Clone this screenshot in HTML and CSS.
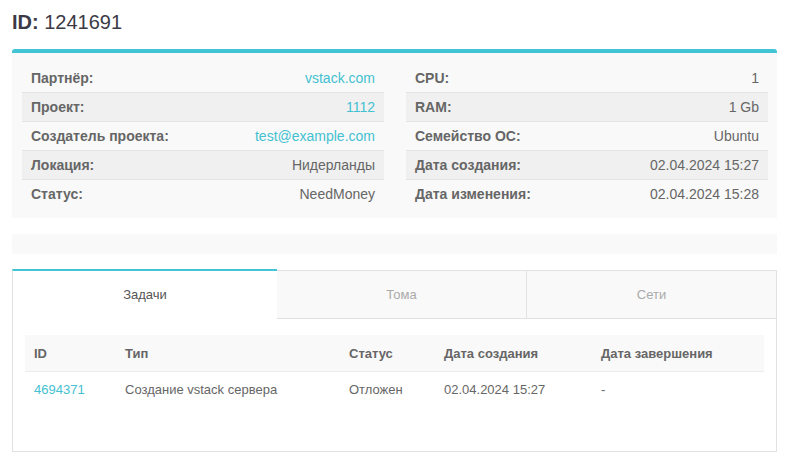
FILE: index.html
```html
<!DOCTYPE html>
<html lang="ru">
  <head>
    <meta charset="UTF-8" />
    <meta name="viewport" content="width=device-width, initial-scale=1.0" />
    <title>ID: 1241691</title>
    <link rel="stylesheet" href="styles.css">
  </head>
  <body>
    <h1 class="page-title"><b>ID:</b> 1241691</h1>

    <div class="info-card">
      <div class="info-table">
        <div class="info-row">
          <span class="info-label">Партнёр:</span>
          <a class="info-value link" href="#">vstack.com</a>
        </div>
        <div class="info-row">
          <span class="info-label">Проект:</span>
          <a class="info-value link" href="#">1112</a>
        </div>
        <div class="info-row">
          <span class="info-label">Создатель проекта:</span>
          <a class="info-value link" href="#">test@example.com</a>
        </div>
        <div class="info-row">
          <span class="info-label">Локация:</span>
          <span class="info-value">Нидерланды</span>
        </div>
        <div class="info-row">
          <span class="info-label">Статус:</span>
          <span class="info-value">NeedMoney</span>
        </div>
      </div>

      <div class="info-table">
        <div class="info-row">
          <span class="info-label">CPU:</span>
          <span class="info-value">1</span>
        </div>
        <div class="info-row">
          <span class="info-label">RAM:</span>
          <span class="info-value">1 Gb</span>
        </div>
        <div class="info-row">
          <span class="info-label">Семейство ОС:</span>
          <span class="info-value">Ubuntu</span>
        </div>
        <div class="info-row">
          <span class="info-label">Дата создания:</span>
          <span class="info-value">02.04.2024 15:27</span>
        </div>
        <div class="info-row">
          <span class="info-label">Дата изменения:</span>
          <span class="info-value">02.04.2024 15:28</span>
        </div>
      </div>
    </div>

    <div class="empty-bar"></div>

    <div class="tabs">
      <div class="tab tab-active">Задачи</div>
      <div class="tab">Тома</div>
      <div class="tab">Сети</div>
    </div>

    <div class="tab-panel">
      <table class="tasks">
        <thead>
          <tr>
            <th class="col-id">ID</th>
            <th class="col-type">Тип</th>
            <th class="col-status">Статус</th>
            <th class="col-created">Дата создания</th>
            <th>Дата завершения</th>
          </tr>
        </thead>
        <tbody>
          <tr>
            <td><a class="link" href="#">4694371</a></td>
            <td>Создание vstack сервера</td>
            <td>Отложен</td>
            <td>02.04.2024 15:27</td>
            <td>-</td>
          </tr>
        </tbody>
      </table>
    </div>
  </body>
</html>
```

FILE: styles.css
```css
body {
  margin: 0;
  padding: 0 9px 0 12px;
  font-family: "Liberation Sans", Arial, sans-serif;
  color: #666;
  background: #fff;
}

.link {
  color: #43c1d1;
  text-decoration: none;
}

.page-title {
  margin: 9px 0 13px;
  font-size: 20px;
  line-height: 27px;
  font-weight: normal;
  color: #3c3a46;
}

.info-card {
  display: grid;
  grid-template-columns: 1fr 1fr;
  column-gap: 22px;
  padding: 11px 9px 10px 10px;
  background: #f9f9f9;
  border-top: 4px solid #43c4d4;
  border-radius: 3px 3px 0 0;
}

.info-row {
  display: flex;
  justify-content: space-between;
  align-items: center;
  height: 28px;
  padding: 0 9px;
  font-size: 14px;
}

.info-row + .info-row {
  border-top: 1px solid #e4e4e4;
}

.info-row:nth-child(even) {
  background: #f0f0f0;
}

.info-label {
  font-weight: bold;
}

.empty-bar {
  height: 20px;
  margin-top: 16px;
  background: #f9f9f9;
}

.tabs {
  display: flex;
  margin-top: 15px;
  height: 50px;
}

.tab {
  flex: 0 0 250px;
  box-sizing: border-box;
  display: flex;
  align-items: center;
  justify-content: center;
  font-size: 13px;
  color: #aaa;
  background: #f9f9f9;
  border: 1px solid #e2e2e2;
  border-left: none;
  margin-top: 1px;
}

.tab-active {
  flex-basis: 265px;
  margin-top: 0;
  color: #555;
  background: #fff;
  border: none;
  border-top: 2px solid #43c4d4;
  border-left: 1px solid #e2e2e2;
  padding-bottom: 2px;
}

.tab-panel {
  padding: 16px 12px 44px;
  border: 1px solid #e2e2e2;
  border-top: none;
}

.tasks {
  width: 100%;
  border-collapse: collapse;
  font-size: 13px;
}

.tasks th {
  height: 36px;
  padding: 0 9px;
  text-align: left;
  background: #f9f9f9;
  border-bottom: 1px solid #ececec;
}

.tasks td {
  height: 35px;
  padding: 0 9px;
}

.col-id {
  width: 73px;
}

.col-type {
  width: 206px;
}

.col-status {
  width: 77px;
}

.col-created {
  width: 139px;
}
```
